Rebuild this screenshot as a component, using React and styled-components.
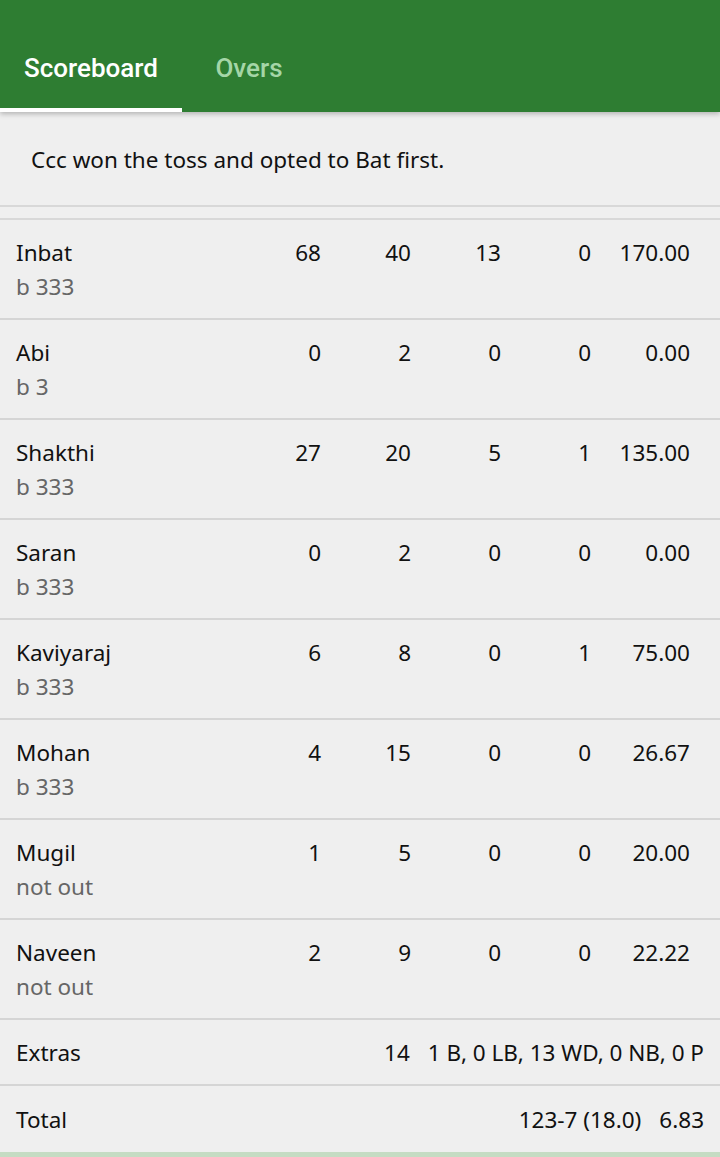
import styled, { createGlobalStyle } from 'styled-components';

const GlobalStyle = createGlobalStyle`
  body {
    margin: 0;
    background: #efefef;
    font-family: 'Noto Sans', 'Open Sans', sans-serif;
  }
`;

const batters = [
  { name: 'Inbat', status: 'b 333', r: 68, b: 40, fours: 13, sixes: 0, sr: '170.00' },
  { name: 'Abi', status: 'b 3', r: 0, b: 2, fours: 0, sixes: 0, sr: '0.00' },
  { name: 'Shakthi', status: 'b 333', r: 27, b: 20, fours: 5, sixes: 1, sr: '135.00' },
  { name: 'Saran', status: 'b 333', r: 0, b: 2, fours: 0, sixes: 0, sr: '0.00' },
  { name: 'Kaviyaraj', status: 'b 333', r: 6, b: 8, fours: 0, sixes: 1, sr: '75.00' },
  { name: 'Mohan', status: 'b 333', r: 4, b: 15, fours: 0, sixes: 0, sr: '26.67' },
  { name: 'Mugil', status: 'not out', r: 1, b: 5, fours: 0, sixes: 0, sr: '20.00' },
  { name: 'Naveen', status: 'not out', r: 2, b: 9, fours: 0, sixes: 0, sr: '22.22' },
];

const App = () => {
  return (
    <Page>
      <GlobalStyle />
      <Header>
        <Tab active>Scoreboard</Tab>
        <Tab>Overs</Tab>
      </Header>
      <Toss>Ccc won the toss and opted to Bat first.</Toss>
      <Table>
        {batters.map((p) => (
          <BatRow key={p.name}>
            <Name>
              {p.name}
              <Status>{p.status}</Status>
            </Name>
            <Num>{p.r}</Num>
            <Num>{p.b}</Num>
            <Num>{p.fours}</Num>
            <Num>{p.sixes}</Num>
            <Num>{p.sr}</Num>
          </BatRow>
        ))}
        <SummaryRow>
          <Label>Extras</Label>
          <Value>14</Value>
          <Value>1 B, 0 LB, 13 WD, 0 NB, 0 P</Value>
        </SummaryRow>
        <SummaryRow>
          <Label>Total</Label>
          <Value>123-7 (18.0)</Value>
          <Value>6.83</Value>
        </SummaryRow>
      </Table>
      <FooterBar />
    </Page>
  );
};

export default App;

const Page = styled.div`
  width: 720px;
  min-height: 1157px;
  background: #efefef;
  display: flex;
  flex-direction: column;
`;

const Header = styled.div`
  height: 112px;
  background: #2e7d32;
  display: flex;
  align-items: stretch;
  box-shadow: 0 2px 5px rgba(0, 0, 0, 0.25);
  position: relative;
  z-index: 1;
`;

const Tab = styled.div`
  box-sizing: border-box;
  width: ${({ active }) => (active ? '182px' : '134px')};
  padding-top: 52px;
  text-align: center;
  font-family: Roboto, sans-serif;
  font-weight: 500;
  font-size: 26px;
  line-height: 32px;
  color: ${({ active }) => (active ? '#ffffff' : '#a5d6a7')};
  border-bottom: 4px solid ${({ active }) => (active ? '#ffffff' : 'transparent')};
`;

const Toss = styled.div`
  height: 95px;
  box-sizing: border-box;
  padding: 32px 31px 0;
  font-size: 22.5px;
  color: #111;
  border-bottom: 2px solid #d8d8d8;
  margin-bottom: 11px;
`;

const Table = styled.div`
  border-top: 2px solid #d8d8d8;
`;

const BatRow = styled.div`
  display: grid;
  grid-template-columns: 1fr 90px 90px 90px 90px 99px;
  height: 100px;
  box-sizing: border-box;
  padding: 16px 30px 0 16px;
  border-bottom: 2px solid #d5d5d5;
  font-size: 22.5px;
  line-height: 34px;
  color: #111;
`;

const Name = styled.div`
  display: flex;
  flex-direction: column;
`;

const Status = styled.span`
  color: #666;
`;

const Num = styled.div`
  text-align: right;
`;

const SummaryRow = styled.div`
  display: flex;
  align-items: center;
  gap: 18px;
  height: 66px;
  box-sizing: border-box;
  padding: 0 16px;
  border-bottom: 2px solid #d5d5d5;
  font-size: 22.5px;
  color: #111;
  &:last-child {
    border-bottom: none;
  }
`;

const Label = styled.div`
  flex: 1;
`;

const Value = styled.div``;

const FooterBar = styled.div`
  margin-top: auto;
  height: 6px;
  background: #c5dcc3;
`;
